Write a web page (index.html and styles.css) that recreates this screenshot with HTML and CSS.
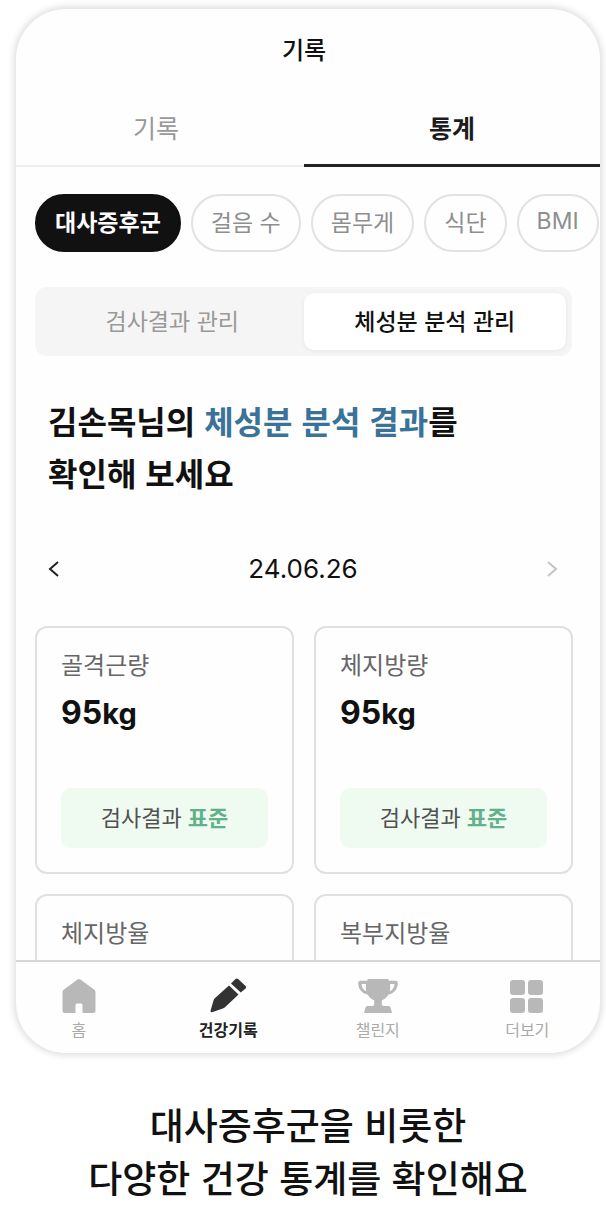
FILE: index.html
```html
<!DOCTYPE html>
<html lang="ko">
<head>
  <meta charset="UTF-8">
  <meta name="viewport" content="width=device-width, initial-scale=1.0">
  <title>건강 통계</title>
  <link rel="stylesheet" href="styles.css">
</head>
<body>
  <main class="phone">
    <div class="screen">
      <h1 class="title">기록</h1>
      <div class="tabs">
        <button type="button" class="tab">기록</button>
        <button type="button" class="tab active">통계</button>
      </div>
      <div class="chips">
        <button type="button" class="chip active">대사증후군</button>
        <button type="button" class="chip">걸음 수</button>
        <button type="button" class="chip">몸무게</button>
        <button type="button" class="chip">식단</button>
        <button type="button" class="chip">BMI</button>
      </div>
      <div class="segment">
        <button type="button" class="segment-btn">검사결과 관리</button>
        <button type="button" class="segment-btn active">체성분 분석 관리</button>
      </div>
      <h2 class="headline">김손목님의 <span>체성분 분석 결과</span>를<br>확인해 보세요</h2>
      <div class="date-row">
        <button type="button" class="arrow" aria-label="이전">
          <svg width="12" height="18" viewBox="0 0 12 18"><path d="M10 2 2 9l8 7"/></svg>
        </button>
        <time class="date" datetime="2024-06-26">24.06.26</time>
        <button type="button" class="arrow off" aria-label="다음">
          <svg width="12" height="18" viewBox="0 0 12 18"><path d="m2 2 8 7-8 7"/></svg>
        </button>
      </div>
      <div class="cards">
        <section class="card">
          <h3 class="card-label">골격근량</h3>
          <p class="card-value">95<span>kg</span></p>
          <p class="badge">검사결과 <b>표준</b></p>
        </section>
        <section class="card">
          <h3 class="card-label">체지방량</h3>
          <p class="card-value">95<span>kg</span></p>
          <p class="badge">검사결과 <b>표준</b></p>
        </section>
        <section class="card">
          <h3 class="card-label">체지방율</h3>
        </section>
        <section class="card">
          <h3 class="card-label">복부지방율</h3>
        </section>
      </div>
    </div>
    <nav class="nav">
      <a href="#" class="nav-item">
        <svg width="40" height="36" viewBox="0 0 40 36"><path d="M18.500 1.600a2.500 2.500 0 0 1 3 0L35 11.500a3 3 0 0 1 1.500 2.500v18.500a2.500 2.500 0 0 1-2.500 2.500H23.500v-8a1.500 1.500 0 0 0-1.500-1.500h-4a1.500 1.500 0 0 0-1.500 1.500v8H6a2.500 2.500 0 0 1-2.500-2.500V14A3 3 0 0 1 5 11.500z"/></svg>
        홈
      </a>
      <a href="#" class="nav-item active">
        <svg width="40" height="36" viewBox="0 0 40 36"><path d="M21 7.500 30.500 16.500 17 29.200Q16 30 14.800 30.400L4 34.200Q2.200 34.500 2.500 32.800L5.500 22.500Q5.900 21.200 6.800 20.300z"/><path d="M23 5.500 27.500 1Q28.800 0 30.100 1L37.600 8Q38.600 9.200 37.600 10.400L32.800 14.500z"/></svg>
        건강기록
      </a>
      <a href="#" class="nav-item">
        <svg width="40" height="36" viewBox="0 0 40 36"><path d="M9 2.800Q9 1 11 1H29Q31 1 31 2.800H38Q39.900 3 39.800 5.500C39.600 11 36 15.500 30.500 16.500Q28.500 20.500 23.800 22.500V26.500Q24 28 26 28H30.500Q32 28 32.500 29.500L34 35H6L7.500 29.500Q8 28 9.500 28H14Q16 28 16.200 26.500V22.500Q11.500 20.500 9.500 16.500C4 15.500.4 11 .2 5.500Q.1 3 2 2.800zM8 6H3.500Q3.600 11 8.200 13.200Q7.600 9.500 8 6zM32 6Q32.400 9.500 31.800 13.200Q36.400 11 36.500 6z" fill-rule="evenodd"/></svg>
        챌린지
      </a>
      <a href="#" class="nav-item">
        <svg width="40" height="36" viewBox="0 0 40 36"><rect x="3" y="2" width="15" height="15" rx="3"/><rect x="21" y="2" width="15" height="15" rx="3"/><rect x="3" y="20" width="15" height="15" rx="3"/><rect x="21" y="20" width="15" height="15" rx="3"/></svg>
        더보기
      </a>
    </nav>
  </main>
  <p class="caption">대사증후군을 비롯한<br>다양한 건강 통계를 확인해요</p>
</body>
</html>
```
FILE: styles.css
```css
* {
  box-sizing: border-box;
}
body {
  margin: 0;
  padding: 9px 6px 0 16px;
  height: 100vh;
  display: flex;
  flex-direction: column;
  background: #fff;
  color: #111;
  font-family: "Noto Sans CJK KR", sans-serif;
}
h1, h2, h3, p {
  margin: 0;
}
button {
  padding: 0;
  border: none;
  background: none;
  font-family: inherit;
  color: inherit;
  cursor: pointer;
}
.phone {
  flex: 1;
  min-height: 0;
  display: flex;
  flex-direction: column;
  overflow: hidden;
  border-radius: 50px;
  background: #fefefe;
  box-shadow: 0 0 7px 2px rgba(0, 0, 0, 0.14);
}
.screen {
  flex: 1;
  min-height: 0;
  overflow: hidden;
  margin-left: -8px;
}
.title {
  padding: 22px 0;
  font-size: 24px;
  font-weight: 500;
  line-height: 36px;
  text-align: center;
}
.tabs {
  display: flex;
}
.tab {
  flex: 1;
  height: 78px;
  font-size: 25px;
  color: #999;
  border-bottom: 2px solid #f0f0f0;
}
.tab.active {
  font-weight: 700;
  color: #1c1c1e;
  border-bottom: 3px solid #222427;
}
.chips {
  display: flex;
  gap: 10px;
  padding: 27px 0 0 27px;
}
.chip {
  flex: none;
  height: 58px;
  padding: 0 18px 4px;
  border: 2px solid #e2e2e2;
  border-radius: 30px;
  font-family: Inter, "Noto Sans CJK KR", sans-serif;
  font-size: 23px;
  color: #8e8e8e;
}
.chip.active {
  border-color: #111;
  background: #111;
  color: #fff;
  font-weight: 700;
}
.segment {
  display: flex;
  margin: 35px 28px 0 27px;
  padding: 6px;
  border-radius: 12px;
  background: #f5f5f5;
}
.segment-btn {
  flex: 1;
  height: 57px;
  padding-bottom: 4px;
  border-radius: 10px;
  font-size: 23px;
  color: #999;
}
.segment-btn.active {
  background: #fff;
  color: #111;
  font-weight: 500;
  box-shadow: 0 1px 5px rgba(0, 0, 0, 0.06);
}
.headline {
  padding: 38px 40px 0;
  font-size: 32px;
  font-weight: 700;
  line-height: 52px;
}
.headline span {
  color: #3a7397;
}
.date-row {
  display: flex;
  align-items: center;
  justify-content: space-between;
  padding: 51px 42px 0 40px;
}
.arrow {
  display: flex;
}
.arrow svg {
  fill: none;
  stroke: #222;
  stroke-width: 2;
}
.arrow.off svg {
  stroke: #c4c4c4;
}
.date {
  font-family: Inter, sans-serif;
  font-size: 26px;
  line-height: 40px;
}
.cards {
  display: grid;
  grid-template-columns: 1fr 1fr;
  gap: 20px;
  padding: 37px 27px 0;
}
.card {
  padding: 21px 24px 24px;
  border: 2px solid #e0e0e0;
  border-radius: 12px;
}
.card-label {
  font-size: 24px;
  font-weight: 400;
  line-height: 30px;
  color: #666;
}
.card-value {
  margin-top: 14px;
  font-family: Inter, sans-serif;
  font-size: 32px;
  font-weight: 700;
  line-height: 40px;
}
.card-value span {
  font-size: 29px;
}
.badge {
  margin-top: 54px;
  padding-bottom: 4px;
  border-radius: 10px;
  background: #effbf0;
  font-size: 22px;
  line-height: 56px;
  text-align: center;
  color: #505050;
}
.badge b {
  color: #62b18b;
}
.nav {
  display: flex;
  height: 93px;
  padding-top: 16px;
  margin: 0 -2px 0 -12px;
  border-top: 2px solid #d6d6d6;
}
.nav-item {
  flex: 1;
  display: flex;
  flex-direction: column;
  align-items: center;
  gap: 3px;
  font-size: 16px;
  line-height: 24px;
  color: #aaa;
  text-decoration: none;
}
.nav-item svg {
  fill: #b8b8b8;
}
.nav-item.active {
  color: #222;
  font-weight: 700;
}
.nav-item.active svg {
  fill: #333;
}
.caption {
  padding: 45px 0 6px;
  font-size: 37px;
  font-weight: 500;
  line-height: 53px;
  text-align: center;
}
```
